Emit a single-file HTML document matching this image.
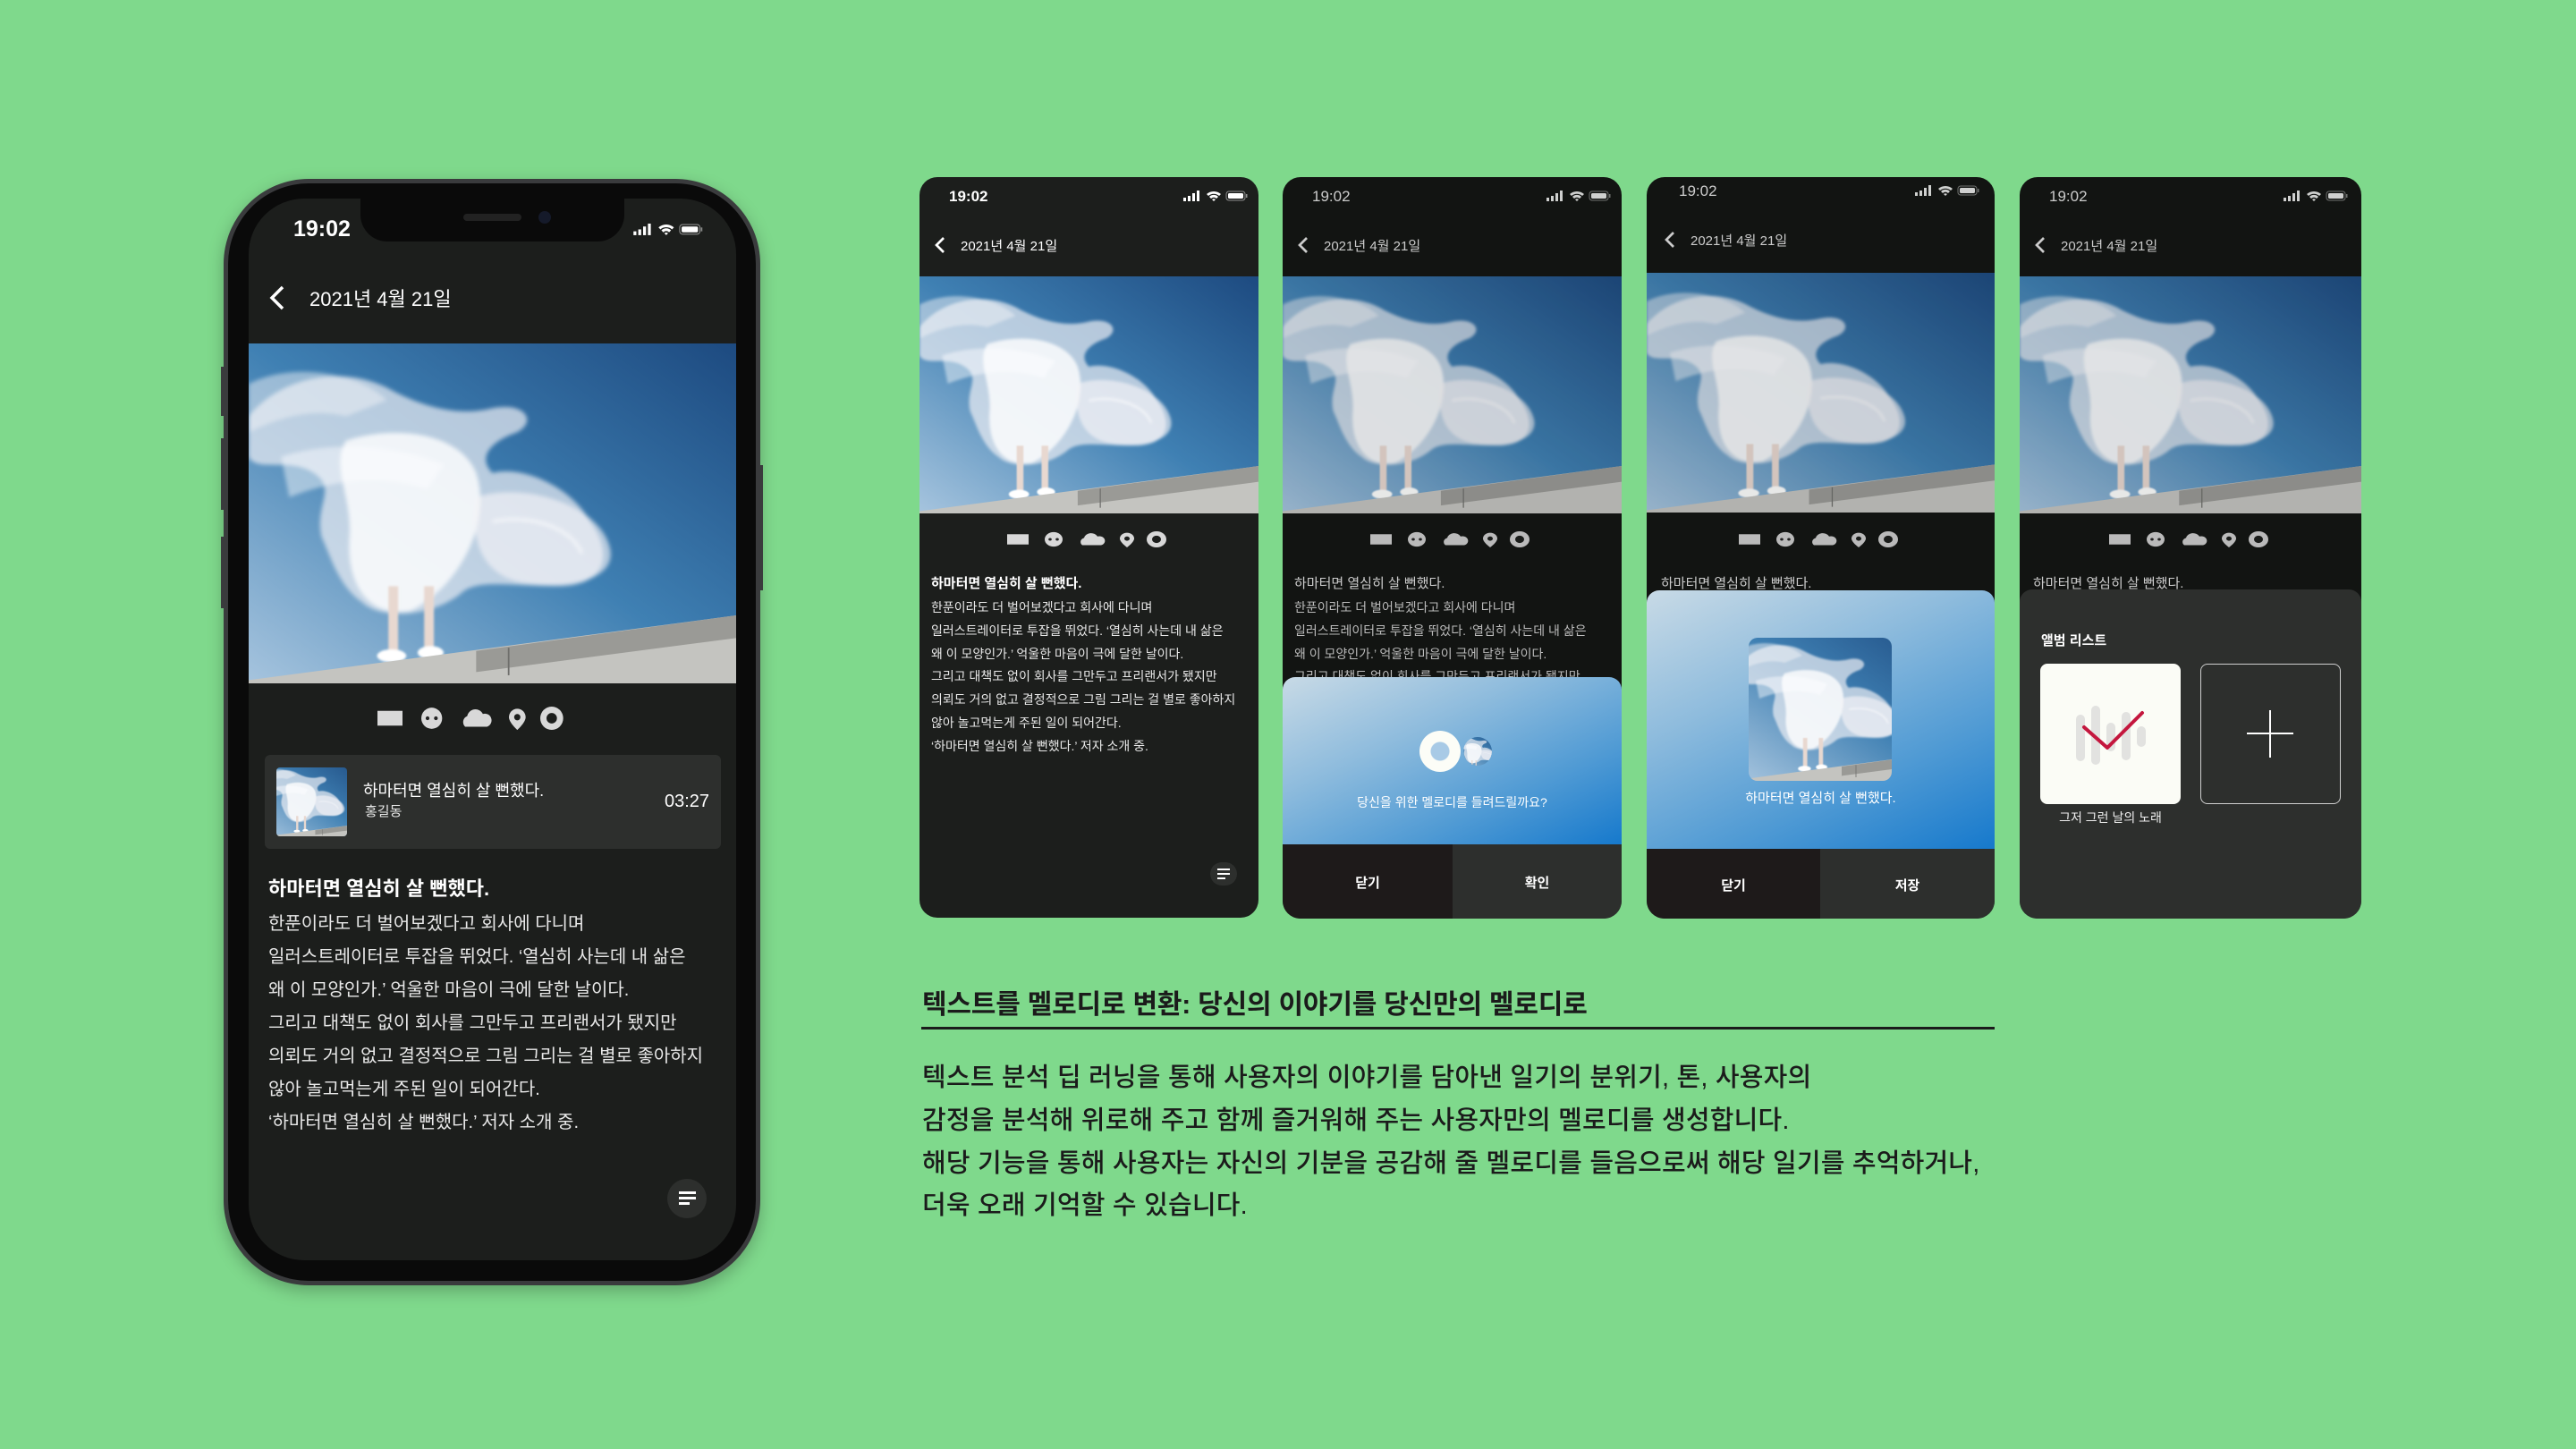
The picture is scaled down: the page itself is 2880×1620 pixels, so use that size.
<!DOCTYPE html>
<html><head><meta charset="utf-8">
<style>
*{margin:0;padding:0;box-sizing:border-box}
body{width:2880px;height:1620px;background:#7fd98c;position:relative;overflow:hidden;font-family:"Liberation Sans","Noto Sans CJK KR",sans-serif}
.a{position:absolute}
.t{position:absolute;white-space:nowrap;font-family:"Liberation Sans","Noto Sans CJK KR",sans-serif}
.scr{position:absolute;overflow:hidden;border-radius:20px;background:#161816}
.dim{background:#121412}
</style></head><body>

<svg width="0" height="0" style="position:absolute">
<defs>
<linearGradient id="sky" x1="1" y1="0" x2="0" y2="1">
<stop offset="0" stop-color="#1d4a80"/><stop offset="0.5" stop-color="#3f80b3"/><stop offset="1" stop-color="#a6c4de"/></linearGradient>
<filter id="bl" x="-20%" y="-20%" width="140%" height="140%"><feGaussianBlur stdDeviation="1.3"/></filter>
<filter id="bl2"><feGaussianBlur stdDeviation="0.7"/></filter>
<g id="photo">
<rect width="300" height="210" fill="url(#sky)"/>
<g filter="url(#bl)">
<path d="M0 45 C20 20 60 12 90 30 C110 40 130 45 150 40 C170 36 178 48 165 55 C150 60 140 70 150 80 C170 75 200 90 210 110 C225 130 220 150 190 150 C160 150 140 145 130 155 C110 170 80 170 70 160 C55 150 50 130 45 120 C40 100 55 90 40 80 C25 70 5 80 0 70 Z" fill="#eceef4" opacity="0.7"/>
<path d="M60 60 C90 50 130 55 140 80 C150 110 130 150 100 165 C75 170 60 150 62 120 C64 95 50 75 60 60 Z" fill="#ffffff" opacity="0.8"/>
<path d="M140 95 C170 85 215 100 222 125 C228 145 200 152 170 148 C150 145 135 130 140 95 Z" fill="#f4f3f6" opacity="0.65"/>
<path d="M0 25 C30 10 70 20 85 35 L60 45 C40 40 20 45 0 55 Z" fill="#f0f2f6" opacity="0.5"/>
<path d="M20 70 C50 60 90 62 120 75 L110 90 C80 80 50 85 25 95 Z" fill="#fff" opacity="0.45"/>
<path d="M150 110 C175 105 200 115 205 130" stroke="#fff" stroke-width="2" fill="none" opacity="0.6"/>
</g>
<g filter="url(#bl2)">
<rect x="86" y="150" width="6" height="40" fill="#e8d8d0"/>
<rect x="108" y="150" width="6" height="38" fill="#e8d8d0"/>
<ellipse cx="88" cy="193" rx="9" ry="4" fill="#fff"/>
<ellipse cx="112" cy="191" rx="8" ry="4" fill="#fff"/>
</g>
<polygon points="0,208 150,188 300,168 300,210 0,210" fill="#c4c4c0"/>
<polygon points="140,190 300,168 300,182 140,203" fill="#9a9a96"/>
<line x1="160" y1="188" x2="160" y2="205" stroke="#6f6f6c" stroke-width="1"/>
</g>
<g id="icons" fill="#d8d8d8">
<rect x="0" y="4" width="24" height="14"/>
<circle cx="52" cy="11" r="10"/><circle cx="48" cy="11" r="1.8" fill="#222"/><circle cx="56" cy="11" r="1.8" fill="#222"/>
<path d="M84 19 a6 6 0 0 1 2 -10 a8 8 0 0 1 15 -2 a6 6 0 0 1 4 12 Z"/>
<path d="M134 2 a8 8 0 0 1 8 8 c0 5 -8 12 -8 12 c0 0 -8 -7 -8 -12 a8 8 0 0 1 8 -8 Z"/><circle cx="134" cy="10" r="3" fill="#1c1e1c"/>
<circle cx="167" cy="11" r="11"/><circle cx="167" cy="11" r="5" fill="#1c1e1c"/>
</g>
<g id="stat" fill="#fff">
<rect x="0" y="8" width="3" height="4"/><rect x="5" y="6" width="3" height="6"/><rect x="10" y="3" width="3" height="9"/><rect x="15" y="0" width="3" height="12"/>
<path d="M26 4 a12 12 0 0 1 16 0 l-2 2 a9 9 0 0 0 -12 0 Z M29 7 a7 7 0 0 1 10 0 l-2 2 a4 4 0 0 0 -6 0 Z M32 10 l2 2 l2 -2 a3 3 0 0 0 -4 0Z"/>
<rect x="48" y="1" width="21" height="10" rx="3" fill="none" stroke="#fff" stroke-opacity=".5"/><rect x="50" y="3" width="17" height="6" rx="1.5"/><rect x="70" y="4" width="1.5" height="4" opacity=".5"/>
</g>
</defs></svg>

<!-- BIG PHONE -->
<div class="a" style="left:250px;top:200px;width:600px;height:1237px;border-radius:95px;background:#3a3b3d;box-shadow:0 6px 18px rgba(0,0,0,.25)"></div>
<div class="a" style="left:255px;top:205px;width:590px;height:1227px;border-radius:90px;background:#0a0a0a"></div>
<div class="a" style="left:247px;top:410px;width:4px;height:55px;background:#3a3b3d"></div>
<div class="a" style="left:247px;top:490px;width:4px;height:80px;background:#3a3b3d"></div>
<div class="a" style="left:247px;top:600px;width:4px;height:80px;background:#3a3b3d"></div>
<div class="a" style="left:849px;top:520px;width:4px;height:140px;background:#3a3b3d"></div>
<div class="a" style="left:278px;top:222px;width:545px;height:1187px;border-radius:62px;background:#1c1e1c;overflow:hidden">
  <div class="a" style="left:125px;top:-2px;width:295px;height:50px;background:#0a0a0a;border-radius:0 0 30px 30px"></div>
  <div class="a" style="left:240px;top:17px;width:65px;height:8px;border-radius:4px;background:#222"></div>
  <div class="a" style="left:324px;top:14px;width:14px;height:14px;border-radius:7px;background:#151a2a"></div>
  <div class="t" style="left:50px;top:20px;font-size:25px;color:#fff;font-weight:bold">19:02</div>
  <svg class="a" style="left:424px;top:28px" width="90" height="14" viewBox="0 0 72 13"><use href="#stat"/></svg>
  <svg class="a" style="left:20px;top:96px" width="24" height="30" viewBox="0 0 24 30"><path d="M18 3 L6 15 L18 27" stroke="#fff" stroke-width="3.5" fill="none"/></svg>
  <div class="t" style="left:68px;top:95px;font-size:22px;color:#fff">2021년 4월 21일</div>
  <svg class="a" style="left:0;top:162px" width="545" height="380" viewBox="0 0 300 210" preserveAspectRatio="none"><use href="#photo"/></svg>
  <svg class="a" style="left:144px;top:568px" width="210" height="26" viewBox="0 0 180 22" preserveAspectRatio="none"><use href="#icons"/></svg>
  <div class="a" style="left:18px;top:622px;width:510px;height:105px;border-radius:6px;background:#2d2f2d"></div>
  <svg class="a" style="left:31px;top:636px;border-radius:4px" width="79" height="77" viewBox="30 10 200 200" preserveAspectRatio="xMidYMid slice"><use href="#photo"/></svg>
  <div class="t" style="left:128px;top:648px;font-size:18px;color:#fff">하마터면 열심히 살 뻔했다.</div>
  <div class="t" style="left:130px;top:674px;font-size:15px;color:#e8e8e8">홍길동</div>
  <div class="t" style="left:465px;top:663px;font-size:20px;color:#fff">03:27</div>
  <div class="t" style="left:22px;top:754px;font-size:22px;color:#fff;font-weight:bold">하마터면 열심히 살 뻔했다.</div>
  <div class="a" style="left:22px;top:793px;font-size:20px;color:#e8e8e8;line-height:37px;white-space:nowrap">한푼이라도 더 벌어보겠다고 회사에 다니며<br>일러스트레이터로 투잡을 뛰었다. ‘열심히 사는데 내 삶은<br>왜 이 모양인가.’ 억울한 마음이 극에 달한 날이다.<br>그리고 대책도 없이 회사를 그만두고 프리랜서가 됐지만<br>의뢰도 거의 없고 결정적으로 그림 그리는 걸 별로 좋아하지<br>않아 놀고먹는게 주된 일이 되어간다.<br>‘하마터면 열심히 살 뻔했다.’ 저자 소개 중.</div>
  <div class="a" style="left:468px;top:1096px;width:44px;height:44px;border-radius:22px;background:#2d2f2d"></div>
  <div class="a" style="left:481px;top:1110px;width:19px;height:3px;background:#fff"></div>
  <div class="a" style="left:481px;top:1116px;width:19px;height:3px;background:#fff"></div>
  <div class="a" style="left:481px;top:1122px;width:12px;height:3px;background:#fff"></div>
</div>

<div class="scr" style="left:1028px;top:198px;width:379px;height:828px;background:#1c1e1c">
  <div class="t" style="left:33px;top:12px;font-size:17px;color:#fff;font-weight:bold">19:02</div>
  <svg class="a" style="left:295px;top:15px" width="72" height="13" viewBox="0 0 72 13"><use href="#stat"/></svg>
  <svg class="a" style="left:15px;top:66px" width="16" height="20" viewBox="0 0 24 30"><path d="M18 3 L6 15 L18 27" stroke="#fff" stroke-width="4" fill="none"/></svg>
  <div class="t" style="left:46px;top:66px;font-size:15px;color:#fff">2021년 4월 21일</div>
  <svg class="a" style="left:0;top:111px" width="379" height="265" viewBox="0 0 300 210" preserveAspectRatio="none"><use href="#photo"/></svg>
  <svg class="a" style="left:98px;top:396px" width="180" height="18" viewBox="0 0 180 22" preserveAspectRatio="none"><use href="#icons"/></svg>
  <div class="t" style="left:13px;top:443px;font-size:15px;color:#fff;font-weight:bold">하마터면 열심히 살 뻔했다.</div>
  <div class="a" style="left:13px;top:469px;font-size:14px;color:#e8e8e8;line-height:25.8px;white-space:nowrap">한푼이라도 더 벌어보겠다고 회사에 다니며<br>일러스트레이터로 투잡을 뛰었다. ‘열심히 사는데 내 삶은<br>왜 이 모양인가.’ 억울한 마음이 극에 달한 날이다.<br>그리고 대책도 없이 회사를 그만두고 프리랜서가 됐지만<br>의뢰도 거의 없고 결정적으로 그림 그리는 걸 별로 좋아하지<br>않아 놀고먹는게 주된 일이 되어간다.<br>‘하마터면 열심히 살 뻔했다.’ 저자 소개 중.</div>
  <div class="a" style="left:325px;top:766px;width:30px;height:26px;border-radius:13px;background:#2d2f2d"></div>
  <div class="a" style="left:333px;top:773px;width:14px;height:2px;background:#fff"></div>
  <div class="a" style="left:333px;top:778px;width:14px;height:2px;background:#fff"></div>
  <div class="a" style="left:333px;top:783px;width:9px;height:2px;background:#fff"></div>
</div>

<div class="scr dim" style="left:1434px;top:198px;width:379px;height:829px">
  <div class="t" style="left:33px;top:12px;font-size:17px;color:#ccc">19:02</div>
  <svg class="a" style="left:295px;top:15px;opacity:.8" width="72" height="13" viewBox="0 0 72 13"><use href="#stat"/></svg>
  <svg class="a" style="left:15px;top:66px" width="16" height="20" viewBox="0 0 24 30"><path d="M18 3 L6 15 L18 27" stroke="#ccc" stroke-width="4" fill="none"/></svg>
  <div class="t" style="left:46px;top:66px;font-size:15px;color:#ccc">2021년 4월 21일</div>
  <svg class="a" style="left:0;top:111px;opacity:.9" width="379" height="265" viewBox="0 0 300 210" preserveAspectRatio="none"><use href="#photo"/></svg>
  <svg class="a" style="left:98px;top:396px;opacity:.85" width="180" height="18" viewBox="0 0 180 22" preserveAspectRatio="none"><use href="#icons"/></svg>
  <div class="t" style="left:13px;top:443px;font-size:15px;color:#ccc">하마터면 열심히 살 뻔했다.</div>
  <div class="a" style="left:13px;top:469px;font-size:14px;color:#bbb;line-height:25.8px;white-space:nowrap">한푼이라도 더 벌어보겠다고 회사에 다니며<br>일러스트레이터로 투잡을 뛰었다. ‘열심히 사는데 내 삶은<br>왜 이 모양인가.’ 억울한 마음이 극에 달한 날이다.<br>그리고 대책도 없이 회사를 그만두고 프리랜서가 됐지만</div>
  <div class="a" style="left:0;top:559px;width:379px;height:187px;border-radius:14px 14px 0 0;background:linear-gradient(155deg,#c8dae6 0%,#8fbcdd 35%,#4f9ad4 70%,#1679cc 100%)"></div>
  <div class="a" style="left:202px;top:626px;width:32px;height:32px;border-radius:16px;overflow:hidden"><svg width="32" height="32" viewBox="40 20 160 160" preserveAspectRatio="xMidYMid slice"><use href="#photo"/></svg></div>
  <div class="a" style="left:153px;top:619px;width:46px;height:46px;border-radius:23px;background:radial-gradient(circle,#a8cae6 0 10px,#fcfdf7 11px)"></div>
  <div class="t" style="left:0;width:379px;text-align:center;top:689px;font-size:14px;color:#fff">당신을 위한 멜로디를 들려드릴까요?</div>
  <div class="a" style="left:0;top:746px;width:190px;height:83px;background:#1e1a1a"></div>
  <div class="a" style="left:190px;top:746px;width:189px;height:83px;background:#2d2f2d"></div>
  <div class="t" style="left:0;width:190px;text-align:center;top:778px;font-size:15px;color:#fff;font-weight:bold">닫기</div>
  <div class="t" style="left:190px;width:189px;text-align:center;top:778px;font-size:15px;color:#fff;font-weight:bold">확인</div>
</div>

<div class="scr dim" style="left:1841px;top:198px;width:389px;height:829px">
  <div class="t" style="left:36px;top:6px;font-size:17px;color:#ccc">19:02</div>
  <svg class="a" style="left:300px;top:9px;opacity:.8" width="72" height="13" viewBox="0 0 72 13"><use href="#stat"/></svg>
  <svg class="a" style="left:18px;top:60px" width="16" height="20" viewBox="0 0 24 30"><path d="M18 3 L6 15 L18 27" stroke="#ccc" stroke-width="4" fill="none"/></svg>
  <div class="t" style="left:49px;top:60px;font-size:15px;color:#ccc">2021년 4월 21일</div>
  <svg class="a" style="left:0;top:107px;opacity:.9" width="389" height="268" viewBox="0 0 300 210" preserveAspectRatio="none"><use href="#photo"/></svg>
  <svg class="a" style="left:103px;top:396px;opacity:.85" width="180" height="18" viewBox="0 0 180 22" preserveAspectRatio="none"><use href="#icons"/></svg>
  <div class="t" style="left:16px;top:443px;font-size:15px;color:#ccc">하마터면 열심히 살 뻔했다.</div>
  <div class="a" style="left:0;top:462px;width:389px;height:289px;border-radius:14px 14px 0 0;background:linear-gradient(155deg,#c8dae6 0%,#8fbcdd 35%,#4f9ad4 70%,#1679cc 100%)"></div>
  <div class="a" style="left:114px;top:515px;width:160px;height:160px;border-radius:10px;overflow:hidden"><svg width="160" height="160" viewBox="10 10 200 200" preserveAspectRatio="xMidYMid slice"><use href="#photo"/></svg></div>
  <div class="t" style="left:0;width:389px;text-align:center;top:683px;font-size:15px;color:#fff">하마터면 열심히 살 뻔했다.</div>
  <div class="a" style="left:0;top:751px;width:194px;height:78px;background:#1e1a1a"></div>
  <div class="a" style="left:194px;top:751px;width:195px;height:78px;background:#2d2f2d"></div>
  <div class="t" style="left:0;width:194px;text-align:center;top:781px;font-size:15px;color:#fff;font-weight:bold">닫기</div>
  <div class="t" style="left:194px;width:195px;text-align:center;top:781px;font-size:15px;color:#fff;font-weight:bold">저장</div>
</div>

<div class="scr dim" style="left:2258px;top:198px;width:382px;height:829px">
  <div class="t" style="left:33px;top:12px;font-size:17px;color:#ccc">19:02</div>
  <svg class="a" style="left:295px;top:15px;opacity:.8" width="72" height="13" viewBox="0 0 72 13"><use href="#stat"/></svg>
  <svg class="a" style="left:15px;top:66px" width="16" height="20" viewBox="0 0 24 30"><path d="M18 3 L6 15 L18 27" stroke="#ccc" stroke-width="4" fill="none"/></svg>
  <div class="t" style="left:46px;top:66px;font-size:15px;color:#ccc">2021년 4월 21일</div>
  <svg class="a" style="left:0;top:111px;opacity:.9" width="382" height="265" viewBox="0 0 300 210" preserveAspectRatio="none"><use href="#photo"/></svg>
  <svg class="a" style="left:100px;top:396px;opacity:.85" width="180" height="18" viewBox="0 0 180 22" preserveAspectRatio="none"><use href="#icons"/></svg>
  <div class="t" style="left:15px;top:443px;font-size:15px;color:#ccc">하마터면 열심히 살 뻔했다.</div>
  <div class="a" style="left:0;top:461px;width:382px;height:368px;border-radius:14px 14px 0 0;background:#2d2f2d"></div>
  <div class="t" style="left:24px;top:507px;font-size:15px;color:#fff;font-weight:bold">앨범 리스트</div>
  <div class="a" style="left:23px;top:544px;width:157px;height:157px;border-radius:8px;background:#fbfcf6"></div>
  <svg class="a" style="left:23px;top:544px" width="157" height="157" viewBox="0 0 157 157">
    <g fill="#e2e2e0"><rect x="40" y="57" width="10" height="52" rx="5"/><rect x="57" y="47" width="10" height="66" rx="5"/><rect x="74" y="66" width="10" height="32" rx="5"/><rect x="91" y="54" width="10" height="54" rx="5"/><rect x="108" y="70" width="10" height="23" rx="5"/></g>
    <path d="M49 71 L75 94 L114 55" stroke="#c4173e" stroke-width="4" fill="none" stroke-linecap="round" stroke-linejoin="round"/>
  </svg>
  <div class="a" style="left:202px;top:544px;width:157px;height:157px;border-radius:8px;border:1.5px solid #cfcfcf"></div>
  <div class="a" style="left:279px;top:596px;width:2px;height:53px;background:#fff"></div>
  <div class="a" style="left:254px;top:621px;width:52px;height:2px;background:#fff"></div>
  <div class="t" style="left:23px;width:157px;text-align:center;top:706px;font-size:14px;color:#eee">그저 그런 날의 노래</div>
</div>

<!-- TEXT -->
<div class="t" style="left:1031px;top:1098px;font-size:30px;font-weight:bold;color:#1b1b1b;letter-spacing:-0.2px">텍스트를 멜로디로 변환: 당신의 이야기를 당신만의 멜로디로</div>
<div class="a" style="left:1030px;top:1148px;width:1200px;height:3px;background:#1b1b1b"></div>
<div class="a" style="left:1031px;top:1182px;font-size:29px;color:#1b1b1b;line-height:47.8px;letter-spacing:0.2px;white-space:nowrap;font-weight:500">텍스트 분석 딥 러닝을 통해 사용자의 이야기를 담아낸 일기의 분위기, 톤, 사용자의<br>감정을 분석해 위로해 주고 함께 즐거워해 주는 사용자만의 멜로디를 생성합니다.<br>해당 기능을 통해 사용자는 자신의 기분을 공감해 줄 멜로디를 들음으로써 해당 일기를 추억하거나,<br>더욱 오래 기억할 수 있습니다.</div>

</body></html>
